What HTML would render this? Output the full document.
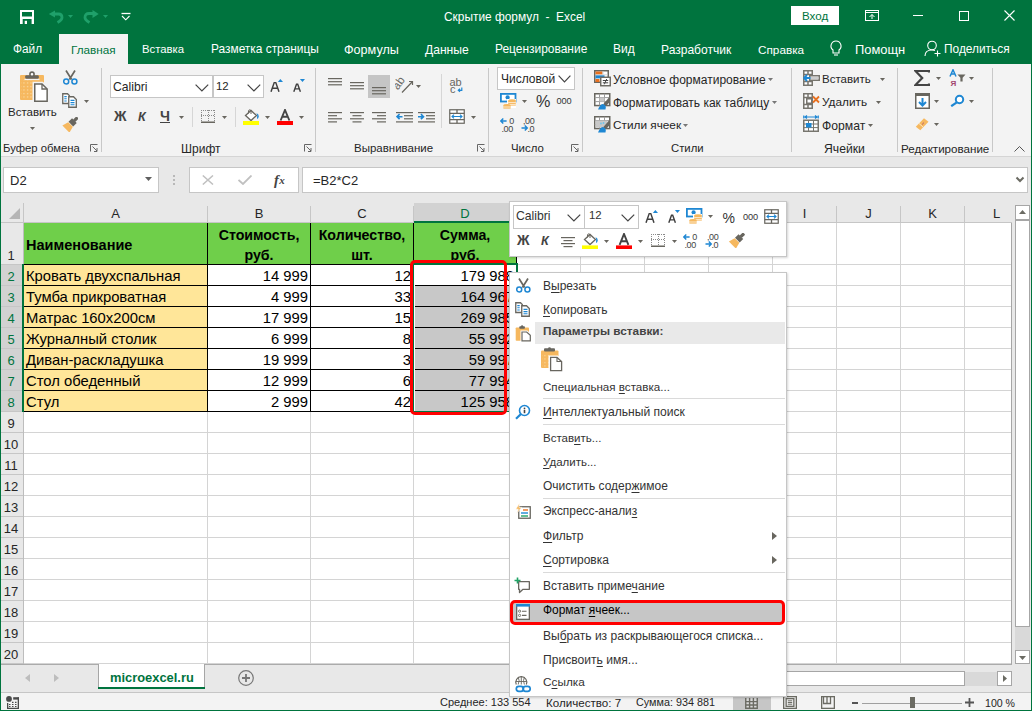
<!DOCTYPE html>
<html><head><meta charset="utf-8"><style>*{box-sizing:border-box}
html,body{margin:0;padding:0}
body{width:1032px;height:711px;overflow:hidden;position:relative;background:#f3f3f3;font-family:"Liberation Sans",sans-serif;font-size:12px;color:#262626}
.a{position:absolute;display:block}
.t{position:absolute;white-space:nowrap;line-height:1}
</style></head><body>
<div class="a" style="left:0px;top:0px;width:1032px;height:64px;background:#00743e;"></div>
<svg class="a" style="left:20px;top:10px;" width="14" height="14" viewBox="0 0 14 14"><rect x="0" y="0" width="14" height="14" fill="#fff"/><rect x="2" y="2" width="10" height="4.5" fill="#00743e"/><rect x="2.7" y="9" width="8.9" height="5" fill="#00743e"/><rect x="4.7" y="10.8" width="2.3" height="3.2" fill="#fff"/></svg>
<svg class="a" style="left:48px;top:9px;" width="16" height="15" viewBox="0 0 16 15"><path d="M0.8 5L7 1.5V8.5Z" fill="#1fa06a"/><path d="M6 5H10.5Q14 5 14 8.5Q14 11 9.5 13.5" fill="none" stroke="#1fa06a" stroke-width="2.8"/></svg>
<svg class="a" style="left:68px;top:15px;" width="5" height="3" viewBox="0 0 5 3"><path d="M0 0H5L2.5 3Z" fill="#1fa06a"/></svg>
<svg class="a" style="left:83px;top:9px;" width="16" height="15" viewBox="0 0 16 15"><path d="M15.7 5L9.5 1V9Z" fill="#1fa06a"/><path d="M10 4.5H6Q2 4.5 2 8.5Q2 11 6.5 13.5" fill="none" stroke="#1fa06a" stroke-width="2.8"/></svg>
<svg class="a" style="left:103px;top:15px;" width="5" height="3" viewBox="0 0 5 3"><path d="M0 0H5L2.5 3Z" fill="#1fa06a"/></svg>
<svg class="a" style="left:121px;top:12px;" width="10" height="9" viewBox="0 0 10 9"><path d="M0.5 1.5H9.5" stroke="#fff" stroke-width="1.3"/><path d="M1 4L4.75 7.8L8.5 4" fill="none" stroke="#fff" stroke-width="1.1"/></svg>
<div class="t" style="left:444px;top:12px;font-size:11.9px;color:#fff;font-weight:normal;">Скрытие формул&nbsp; -&nbsp; Excel</div>
<div class="a" style="left:791px;top:6px;width:48px;height:19px;background:#fff;"></div>
<div class="t" style="left:802px;top:10px;font-size:11.6px;color:#00743e;font-weight:normal;">Вход</div>
<svg class="a" style="left:865px;top:10px;" width="14" height="11" viewBox="0 0 14 11"><rect x="0.5" y="0.5" width="13" height="10" fill="none" stroke="#fff"/><path d="M0.5 2.5H13.5" stroke="#fff"/><path d="M7 9V4.5M4.5 7L7 4.5L9.5 7" fill="none" stroke="#fff"/></svg>
<div class="a" style="left:913px;top:15px;width:10px;height:1px;background:#fff;"></div>
<svg class="a" style="left:959px;top:11px;" width="10" height="10" viewBox="0 0 10 10"><rect x="0.5" y="0.5" width="9" height="9" fill="none" stroke="#fff"/></svg>
<svg class="a" style="left:1004px;top:10px;" width="11" height="11" viewBox="0 0 11 11"><path d="M0.5 0.5L10.5 10.5M10.5 0.5L0.5 10.5" stroke="#fff" stroke-width="1.1"/></svg>
<div class="a" style="left:59px;top:34px;width:69px;height:30px;background:#f3f3f3;"></div>
<div class="t" style="left:13px;top:43.6px;font-size:11.86px;color:#fff;font-weight:normal;">Файл</div>
<div class="t" style="left:71px;top:43.6px;font-size:11.76px;color:#00743e;font-weight:normal;">Главная</div>
<div class="t" style="left:142px;top:43.6px;font-size:11.34px;color:#fff;font-weight:normal;">Вставка</div>
<div class="t" style="left:211px;top:43.6px;font-size:11.9px;color:#fff;font-weight:normal;">Разметка страницы</div>
<div class="t" style="left:344px;top:43.6px;font-size:12.6px;color:#fff;font-weight:normal;">Формулы</div>
<div class="t" style="left:425px;top:43.6px;font-size:12.1px;color:#fff;font-weight:normal;">Данные</div>
<div class="t" style="left:495px;top:43.6px;font-size:11.96px;color:#fff;font-weight:normal;">Рецензирование</div>
<div class="t" style="left:613px;top:43.6px;font-size:11.95px;color:#fff;font-weight:normal;">Вид</div>
<div class="t" style="left:661px;top:43.6px;font-size:12.06px;color:#fff;font-weight:normal;">Разработчик</div>
<div class="t" style="left:758px;top:43.6px;font-size:11.76px;color:#fff;font-weight:normal;">Справка</div>
<div class="t" style="left:855px;top:43.6px;font-size:12.9px;color:#fff;font-weight:normal;">Помощн</div>
<div class="t" style="left:944px;top:43.6px;font-size:11.89px;color:#fff;font-weight:normal;">Поделиться</div>
<svg class="a" style="left:829px;top:40px;" width="14" height="17" viewBox="0 0 14 17"><path d="M7 1A5 5 0 0 0 4 10V13H10V10A5 5 0 0 0 7 1Z" fill="none" stroke="#fff" stroke-width="1.1"/><path d="M5 15H9" stroke="#fff" stroke-width="1.1"/></svg>
<svg class="a" style="left:924px;top:40px;" width="18" height="17" viewBox="0 0 18 17"><circle cx="8" cy="5.5" r="4.3" fill="none" stroke="#fff" stroke-width="1.1"/><path d="M1 16C1 11.5 4 10 8 10C9 10 10 10.2 11 10.6" fill="none" stroke="#fff" stroke-width="1.1"/><path d="M13.5 10.5V16.5M10.5 13.5H16.5" stroke="#fff" stroke-width="1.1"/></svg>
<div class="a" style="left:1px;top:64px;width:1030px;height:92px;background:#f3f3f3;"></div>
<div class="a" style="left:1px;top:156px;width:1030px;height:1px;background:#d5d5d5;"></div>
<div class="a" style="left:101px;top:68px;width:1px;height:84px;background:#c8c8c8;"></div>
<div class="a" style="left:315px;top:68px;width:1px;height:84px;background:#c8c8c8;"></div>
<div class="a" style="left:488px;top:68px;width:1px;height:84px;background:#c8c8c8;"></div>
<div class="a" style="left:582px;top:68px;width:1px;height:84px;background:#c8c8c8;"></div>
<div class="a" style="left:791px;top:68px;width:1px;height:84px;background:#c8c8c8;"></div>
<div class="a" style="left:897px;top:68px;width:1px;height:84px;background:#c8c8c8;"></div>
<div class="a" style="left:992px;top:68px;width:1px;height:84px;background:#c8c8c8;"></div>
<div class="t" style="left:3px;top:143px;font-size:11.3px;color:#262626;font-weight:normal;">Буфер обмена</div>
<div class="t" style="left:181px;top:143px;font-size:12.0px;color:#262626;font-weight:normal;">Шрифт</div>
<div class="t" style="left:354px;top:143px;font-size:11.5px;color:#262626;font-weight:normal;">Выравнивание</div>
<div class="t" style="left:511px;top:143px;font-size:11.4px;color:#262626;font-weight:normal;">Число</div>
<div class="t" style="left:671px;top:143px;font-size:11.3px;color:#262626;font-weight:normal;">Стили</div>
<div class="t" style="left:824px;top:143px;font-size:12.2px;color:#262626;font-weight:normal;">Ячейки</div>
<div class="t" style="left:901px;top:143px;font-size:11.6px;color:#262626;font-weight:normal;">Редактирование</div>
<svg class="a" style="left:90px;top:144px;" width="8" height="8" viewBox="0 0 8 8"><path d="M0.5 7.5V0.5H7.5" fill="none" stroke="#666"/><path d="M2.5 2.5L7 7M7 4V7.5H4" fill="none" stroke="#666"/></svg>
<svg class="a" style="left:304px;top:144px;" width="8" height="8" viewBox="0 0 8 8"><path d="M0.5 7.5V0.5H7.5" fill="none" stroke="#666"/><path d="M2.5 2.5L7 7M7 4V7.5H4" fill="none" stroke="#666"/></svg>
<svg class="a" style="left:477px;top:144px;" width="8" height="8" viewBox="0 0 8 8"><path d="M0.5 7.5V0.5H7.5" fill="none" stroke="#666"/><path d="M2.5 2.5L7 7M7 4V7.5H4" fill="none" stroke="#666"/></svg>
<svg class="a" style="left:571px;top:144px;" width="8" height="8" viewBox="0 0 8 8"><path d="M0.5 7.5V0.5H7.5" fill="none" stroke="#666"/><path d="M2.5 2.5L7 7M7 4V7.5H4" fill="none" stroke="#666"/></svg>
<svg class="a" style="left:1014px;top:146px;" width="11" height="6" viewBox="0 0 11 6"><path d="M0.5 5.5L5.5 0.5L10.5 5.5" fill="none" stroke="#555"/></svg>
<svg class="a" style="left:19px;top:71px;" width="30" height="32" viewBox="0 0 30 32"><defs><pattern id="dots" width="3.5" height="3.5" patternUnits="userSpaceOnUse"><circle cx="1.5" cy="1.5" r="0.7" fill="#fbe0b0"/></pattern></defs><rect x="1" y="4" width="24" height="25" rx="1" fill="#f6b85f"/><rect x="2" y="9" width="12" height="19" fill="url(#dots)"/><rect x="5.5" y="7.7" width="15" height="1.4" fill="#f3f3f3"/><rect x="6.2" y="4.2" width="13.6" height="3.6" rx="1.2" fill="#68665f"/><circle cx="13" cy="3.2" r="2.1" fill="#fff" stroke="#68665f" stroke-width="1.6"/><path d="M15 12.2H23.3L28.9 17.5V31H15Z" fill="#fff" stroke="#f3f3f3" stroke-width="3"/><path d="M15.75 12.95H23L28.15 18V30.25H15.75Z" fill="#fff" stroke="#68665f" stroke-width="1.5"/><path d="M23 12.95V18H28.15" fill="none" stroke="#68665f" stroke-width="1.3"/></svg>
<div class="t" style="left:8px;top:107px;font-size:11.5px;color:#262626;font-weight:normal;">Вставить</div>
<svg class="a" style="left:30px;top:127px;" width="5" height="3" viewBox="0 0 5 3"><path d="M0 0H5L2.5 3Z" fill="#68665f"/></svg>
<svg class="a" style="left:63px;top:70px;" width="15" height="15" viewBox="0 0 15 15"><path d="M3 0.5L8.6 9.5M12 0.5L6.4 9.5" stroke="#68665f" stroke-width="1.7"/><circle cx="3.2" cy="11.6" r="2.5" fill="none" stroke="#1e87d3" stroke-width="1.5"/><circle cx="11.4" cy="11.6" r="2.5" fill="none" stroke="#1e87d3" stroke-width="1.5"/></svg>
<svg class="a" style="left:62px;top:93px;" width="16" height="15" viewBox="0 0 16 15"><path d="M0.75 0.75H5.5L7.3 2.5V10.5H0.75Z" fill="#fff" stroke="#68665f" stroke-width="1.3"/><path d="M6.75 3.75H11.5L14.3 6.5V14.25H6.75Z" fill="#fff" stroke="#68665f" stroke-width="1.3"/><path d="M2.3 3.6H4.7M2.3 5.8H4.7M2.3 8H4.7" stroke="#1e87d3" stroke-width="1.1"/><path d="M8.5 7.4H12.5M8.5 9.6H12.5M8.5 11.8H12.5" stroke="#1e87d3" stroke-width="1.1"/></svg>
<svg class="a" style="left:84px;top:100px;" width="5" height="3" viewBox="0 0 5 3"><path d="M0 0H5L2.5 3Z" fill="#68665f"/></svg>
<svg class="a" style="left:62px;top:117px;" width="16" height="15" viewBox="0 0 16 15"><g transform="translate(8.5 7.5) rotate(45)"><rect x="-1.6" y="-10" width="3.2" height="5" rx="0.8" fill="#68665f"/><rect x="-3.3" y="-5.5" width="6.6" height="5" fill="#68665f"/><path d="M-3.3 0H3.3L5 6.5H-5Z" fill="#f6b85f"/></g></svg>
<div class="a" style="left:110px;top:75px;width:103px;height:23px;background:#fff;border:1px solid #c6c6c6"></div>
<div class="a" style="left:213px;top:75px;width:51px;height:23px;background:#fff;border:1px solid #c6c6c6"></div>
<div class="t" style="left:113px;top:81px;font-size:12.2px;color:#262626;font-weight:normal;">Calibri</div>
<div class="t" style="left:216px;top:81px;font-size:11.4px;color:#262626;font-weight:normal;">12</div>
<svg class="a" style="left:195px;top:84px;" width="14" height="8" viewBox="0 0 14 8"><path d="M0.6 0.6L6.9 7L13.2 0.6" fill="none" stroke="#444" stroke-width="1.2"/></svg>
<svg class="a" style="left:247px;top:84px;" width="14" height="8" viewBox="0 0 14 8"><path d="M0.6 0.6L6.9 7L13.2 0.6" fill="none" stroke="#444" stroke-width="1.2"/></svg>
<svg class="a" style="left:270px;top:79px;" width="14" height="13" viewBox="0 0 14 13"><path d="M1 12.8L4.2 3.6H5.8L9 12.8M2.5 9.2H7.5" fill="none" stroke="#3f3f3f" stroke-width="1.45"/><path d="M7.8 3L10.4 0L13 3Z" fill="#1e87d3"/></svg>
<svg class="a" style="left:292px;top:79px;" width="14" height="13" viewBox="0 0 14 13"><path d="M1.8 12.8L4.5 5.3H5.7L8.4 12.8M3 9.9H7.2" fill="none" stroke="#3f3f3f" stroke-width="1.4"/><path d="M7.9 0H13L10.45 3Z" fill="#1e87d3"/></svg>
<div class="t" style="left:114px;top:110px;font-size:13.8px;color:#444;font-weight:bold;">Ж</div>
<div class="t" style="left:138px;top:110.5px;font-size:12.6px;color:#444;font-weight:bold;font-style:italic">К</div>
<div class="t" style="left:160px;top:109.2px;font-size:14.2px;color:#444;font-weight:bold;">Ч</div>
<div class="a" style="left:160px;top:122px;width:10px;height:1px;background:#444;"></div>
<svg class="a" style="left:179px;top:116px;" width="5" height="3" viewBox="0 0 5 3"><path d="M0 0H5L2.5 3Z" fill="#68665f"/></svg>
<div class="a" style="left:192px;top:107px;width:1px;height:20px;background:#d6d6d6;"></div>
<svg class="a" style="left:201px;top:110px;" width="14" height="13" viewBox="0 0 14 13"><rect x="0" y="0" width="1" height="1" fill="#8a8a8a"/><rect x="0" y="5" width="1" height="1" fill="#8a8a8a"/><rect x="2" y="0" width="1" height="1" fill="#8a8a8a"/><rect x="2" y="5" width="1" height="1" fill="#8a8a8a"/><rect x="4" y="0" width="1" height="1" fill="#8a8a8a"/><rect x="4" y="5" width="1" height="1" fill="#8a8a8a"/><rect x="6" y="0" width="1" height="1" fill="#8a8a8a"/><rect x="6" y="5" width="1" height="1" fill="#8a8a8a"/><rect x="8" y="0" width="1" height="1" fill="#8a8a8a"/><rect x="8" y="5" width="1" height="1" fill="#8a8a8a"/><rect x="10" y="0" width="1" height="1" fill="#8a8a8a"/><rect x="10" y="5" width="1" height="1" fill="#8a8a8a"/><rect x="12" y="0" width="1" height="1" fill="#8a8a8a"/><rect x="12" y="5" width="1" height="1" fill="#8a8a8a"/><rect x="0" y="0" width="1" height="1" fill="#8a8a8a"/><rect x="13" y="0" width="1" height="1" fill="#8a8a8a"/><rect x="7" y="0" width="1" height="1" fill="#8a8a8a"/><rect x="0" y="2" width="1" height="1" fill="#8a8a8a"/><rect x="13" y="2" width="1" height="1" fill="#8a8a8a"/><rect x="7" y="2" width="1" height="1" fill="#8a8a8a"/><rect x="0" y="4" width="1" height="1" fill="#8a8a8a"/><rect x="13" y="4" width="1" height="1" fill="#8a8a8a"/><rect x="7" y="4" width="1" height="1" fill="#8a8a8a"/><rect x="0" y="6" width="1" height="1" fill="#8a8a8a"/><rect x="13" y="6" width="1" height="1" fill="#8a8a8a"/><rect x="7" y="6" width="1" height="1" fill="#8a8a8a"/><rect x="0" y="8" width="1" height="1" fill="#8a8a8a"/><rect x="13" y="8" width="1" height="1" fill="#8a8a8a"/><rect x="7" y="8" width="1" height="1" fill="#8a8a8a"/><rect x="0" y="10" width="1" height="1" fill="#8a8a8a"/><rect x="13" y="10" width="1" height="1" fill="#8a8a8a"/><rect x="7" y="10" width="1" height="1" fill="#8a8a8a"/><rect x="0" y="11.5" width="14" height="1.5" fill="#68665f"/></svg>
<svg class="a" style="left:222px;top:116px;" width="5" height="3" viewBox="0 0 5 3"><path d="M0 0H5L2.5 3Z" fill="#68665f"/></svg>
<div class="a" style="left:235px;top:107px;width:1px;height:20px;background:#d6d6d6;"></div>
<svg class="a" style="left:243px;top:109px;" width="17" height="16" viewBox="0 0 17 16"><path d="M2.5 6.5L8 1.5L13.5 6.5L8 11.5Z" fill="#fff" stroke="#68665f" stroke-width="1.3"/><path d="M5.5 4.5V1.8A1.3 1.3 0 0 1 8 1.8V5" fill="none" stroke="#68665f" stroke-width="1"/><path d="M13.5 4Q16 5 15.8 7.5Q15.5 9.5 14 10L14.2 6Z" fill="#1e87d3"/><rect x="0" y="12" width="16" height="4" fill="#ffff00"/></svg>
<svg class="a" style="left:265px;top:116px;" width="5" height="3" viewBox="0 0 5 3"><path d="M0 0H5L2.5 3Z" fill="#68665f"/></svg>
<svg class="a" style="left:277px;top:109px;" width="16" height="16" viewBox="0 0 16 16"><path d="M3.6 11.5L8 1L12.4 11.5M5.2 7.8H10.8" fill="none" stroke="#444" stroke-width="1.9"/><rect x="0" y="12" width="16" height="4" fill="#ff0000"/></svg>
<svg class="a" style="left:299px;top:116px;" width="5" height="3" viewBox="0 0 5 3"><path d="M0 0H5L2.5 3Z" fill="#68665f"/></svg>
<svg class="a" style="left:328px;top:78px;" width="14" height="9.3" viewBox="0 0 14 9.3"><rect x="0.0" y="0.0" width="14" height="1.2" fill="#68665f"/><rect x="0.0" y="3.1" width="14" height="1.2" fill="#68665f"/><rect x="0.0" y="6.2" width="14" height="1.2" fill="#68665f"/></svg>
<svg class="a" style="left:350px;top:82px;" width="14" height="9.3" viewBox="0 0 14 9.3"><rect x="0.0" y="0.0" width="14" height="1.2" fill="#68665f"/><rect x="0.0" y="3.1" width="14" height="1.2" fill="#68665f"/><rect x="0.0" y="6.2" width="14" height="1.2" fill="#68665f"/></svg>
<div class="a" style="left:368px;top:75px;width:22px;height:23px;background:#c5c5c5;"></div>
<svg class="a" style="left:372px;top:87px;" width="14" height="9.3" viewBox="0 0 14 9.3"><rect x="0.0" y="0.0" width="14" height="1.2" fill="#68665f"/><rect x="0.0" y="3.1" width="14" height="1.2" fill="#68665f"/><rect x="0.0" y="6.2" width="14" height="1.2" fill="#68665f"/></svg>
<svg class="a" style="left:395px;top:77px;" width="19" height="17" viewBox="0 0 19 17"><text x="0" y="0" font-size="11.5" font-family="Liberation Sans" fill="#68665f" transform="translate(3 13.5) rotate(-55)">ab</text><path d="M7 15.5L17.5 4.5M14 4.5H17.5V8" fill="none" stroke="#68665f" stroke-width="1.2"/></svg>
<svg class="a" style="left:416px;top:85px;" width="5" height="3" viewBox="0 0 5 3"><path d="M0 0H5L2.5 3Z" fill="#68665f"/></svg>
<div class="a" style="left:441px;top:74px;width:1px;height:54px;background:#d6d6d6;"></div>
<svg class="a" style="left:449px;top:77px;" width="16" height="18" viewBox="0 0 16 18"><text x="0.5" y="9" font-size="11" font-family="Liberation Sans" fill="#68665f">ab</text><text x="1" y="16" font-size="11" font-family="Liberation Sans" fill="#68665f">c</text><path d="M12.8 10.5V13.3H9.5M11 11.8L9.3 13.3L11 14.8" fill="none" stroke="#1e87d3" stroke-width="1.2"/></svg>
<svg class="a" style="left:328px;top:112px;" width="14" height="12.4" viewBox="0 0 14 12.4"><rect x="0" y="0.0" width="14" height="1.2" fill="#68665f"/><rect x="0" y="3.1" width="9" height="1.2" fill="#68665f"/><rect x="0" y="6.2" width="14" height="1.2" fill="#68665f"/><rect x="0" y="9.3" width="9" height="1.2" fill="#68665f"/></svg>
<svg class="a" style="left:350px;top:112px;" width="14" height="12.4" viewBox="0 0 14 12.4"><rect x="0.0" y="0.0" width="14" height="1.2" fill="#68665f"/><rect x="2.5" y="3.1" width="9" height="1.2" fill="#68665f"/><rect x="0.0" y="6.2" width="14" height="1.2" fill="#68665f"/><rect x="2.5" y="9.3" width="9" height="1.2" fill="#68665f"/></svg>
<svg class="a" style="left:372px;top:112px;" width="14" height="12.4" viewBox="0 0 14 12.4"><rect x="0" y="0.0" width="14" height="1.2" fill="#68665f"/><rect x="5" y="3.1" width="9" height="1.2" fill="#68665f"/><rect x="0" y="6.2" width="14" height="1.2" fill="#68665f"/><rect x="5" y="9.3" width="9" height="1.2" fill="#68665f"/></svg>
<svg class="a" style="left:396px;top:112px;" width="17" height="11" viewBox="0 0 17 11"><rect x="0" y="0" width="17" height="1.2" fill="#68665f"/><rect x="8" y="3.1" width="9" height="1.2" fill="#68665f"/><rect x="8" y="6.2" width="9" height="1.2" fill="#68665f"/><rect x="0" y="9.3" width="17" height="1.2" fill="#68665f"/><path d="M1 4.7H6.5M3.6 2.2L1 4.7L3.6 7.2" fill="none" stroke="#1e87d3" stroke-width="1.6"/></svg>
<svg class="a" style="left:418px;top:112px;" width="17" height="11" viewBox="0 0 17 11"><rect x="0" y="0" width="17" height="1.2" fill="#68665f"/><rect x="8" y="3.1" width="9" height="1.2" fill="#68665f"/><rect x="8" y="6.2" width="9" height="1.2" fill="#68665f"/><rect x="0" y="9.3" width="17" height="1.2" fill="#68665f"/><path d="M0 4.7H5.5M2.9 2.2L5.5 4.7L2.9 7.2" fill="none" stroke="#1e87d3" stroke-width="1.6"/></svg>
<svg class="a" style="left:449px;top:109px;" width="16" height="15" viewBox="0 0 16 15"><rect x="0.75" y="0.75" width="14.5" height="13.5" fill="#fff" stroke="#68665f" stroke-width="1.2"/><path d="M0.75 4.3H15.25M0.75 10.7H15.25M8.0 0.75V4.3M8.0 10.7V14.25" stroke="#68665f" stroke-width="1.3"/><path d="M3 7.5H13M5 5.7L3 7.5L5 9.3M11 5.7L13 7.5L11 9.3" fill="none" stroke="#1e87d3" stroke-width="1.1"/></svg>
<svg class="a" style="left:471px;top:116px;" width="5" height="3" viewBox="0 0 5 3"><path d="M0 0H5L2.5 3Z" fill="#68665f"/></svg>
<div class="a" style="left:497px;top:67px;width:78px;height:23px;background:#fff;border:1px solid #c6c6c6;overflow:hidden"><div class="t" style="left:3px;top:5px;font-size:12.0px;color:#262626">Числовой</div></div>
<div class="a" style="left:555px;top:68px;width:19px;height:21px;background:#fff;"></div>
<svg class="a" style="left:558px;top:75px;" width="13" height="8" viewBox="0 0 13 8"><path d="M0.6 0.6L6.5 6.8L12.4 0.6" fill="none" stroke="#444" stroke-width="1.2"/></svg>
<svg class="a" style="left:500px;top:93px;" width="17" height="17" viewBox="0 0 17 17"><rect x="0.9" y="0.9" width="14.6" height="7.6" fill="#fff" stroke="#1e87d3" stroke-width="1.8"/><circle cx="7.6" cy="4.4" r="2.1" fill="#1e87d3"/><rect x="7" y="6" width="9" height="9" fill="#fff"/><ellipse cx="12" cy="7.6" rx="3.8" ry="1.3" fill="#f6b85f"/><rect x="8.2" y="7.6" width="7.6" height="5" fill="#f6b85f"/><path d="M8.2 9.6H15.8M8.2 11.6H15.8" stroke="#fff" stroke-width="0.7"/><ellipse cx="7" cy="12.2" rx="3.6" ry="1.3" fill="#f6b85f"/><rect x="3.4" y="12.2" width="7.2" height="3.4" fill="#f6b85f"/><path d="M3.4 14H10.6" stroke="#fff" stroke-width="0.7"/></svg>
<svg class="a" style="left:522px;top:100px;" width="5" height="3" viewBox="0 0 5 3"><path d="M0 0H5L2.5 3Z" fill="#68665f"/></svg>
<div class="t" style="left:536px;top:92.8px;font-size:16.2px;color:#333;font-weight:normal;">%</div>
<div class="t" style="left:556.5px;top:96.5px;font-size:9.2px;color:#333;font-weight:normal;letter-spacing:-0.1px">000</div>
<svg class="a" style="left:500px;top:117px;" width="16" height="15" viewBox="0 0 16 15"><path d="M0.8 4H6.6M3.3 1.4L0.8 4L3.3 6.6" fill="none" stroke="#1e87d3" stroke-width="1.4"/><text x="9.3" y="7" font-size="9" font-family="Liberation Sans" fill="#444">0</text><text x="1.5" y="14.5" font-size="9" font-family="Liberation Sans" fill="#444" letter-spacing="-0.4">,00</text></svg>
<svg class="a" style="left:521px;top:117px;" width="16" height="15" viewBox="0 0 16 15"><text x="2" y="7" font-size="9" font-family="Liberation Sans" fill="#444" letter-spacing="-0.4">,00</text><path d="M0.5 11H6.3M3.8 8.4L6.3 11L3.8 13.6" fill="none" stroke="#1e87d3" stroke-width="1.4"/><text x="6.5" y="14.5" font-size="9" font-family="Liberation Sans" fill="#444" letter-spacing="-0.4">,0</text></svg>
<svg class="a" style="left:594px;top:70px;" width="17" height="17" viewBox="0 0 17 17"><rect x="0.75" y="0.75" width="13.5" height="11.5" fill="#fff" stroke="#68665f" stroke-width="1.5"/><rect x="1.5" y="1.5" width="7" height="3" fill="#e8701f"/><rect x="1.5" y="5.2" width="9" height="3.2" fill="#1e87d3"/><rect x="1.5" y="9" width="4" height="3" fill="#e8701f"/><path d="M9 1V4.5M1.5 4.8H13.5" stroke="#ccc" stroke-width="0.8"/><rect x="6.5" y="7.5" width="10" height="9" fill="#fff" stroke="#f3f3f3" stroke-width="1"/><rect x="6.75" y="7.25" width="9.5" height="8.5" fill="#fff" stroke="#68665f" stroke-width="1.4"/><path d="M8.8 10.5H14.2M8.8 12.8H14.2M12.7 9L10.3 14.3" stroke="#444" stroke-width="1"/></svg>
<div class="t" style="left:613px;top:74px;font-size:12.0px;color:#262626;font-weight:normal;">Условное форматирование</div>
<svg class="a" style="left:594px;top:93px;" width="17" height="17" viewBox="0 0 17 17"><rect x="0.75" y="0.75" width="15" height="11.8" fill="#fff" stroke="#68665f" stroke-width="1.5"/><path d="M0.75 4.6H15.75M0.75 8.6H15.75M5.5 0.75V12.5M10.5 0.75V12.5" stroke="#9a9a9a" stroke-width="1"/><rect x="5.5" y="4.6" width="5" height="4" fill="#c8c8c8"/><path d="M15.8 3.5L9 11.5L12 13L15.8 9Z" fill="#68665f"/><path d="M8.5 11Q6 11.5 4 16.5H11.5Q12.5 14 11 12Z" fill="#1e87d3"/></svg>
<div class="t" style="left:613px;top:97px;font-size:12.0px;color:#262626;font-weight:normal;">Форматировать как таблицу</div>
<svg class="a" style="left:594px;top:116px;" width="17" height="17" viewBox="0 0 17 17"><rect x="0.75" y="0.75" width="15" height="11.8" fill="#fff" stroke="#68665f" stroke-width="1.5"/><path d="M0.75 4.6H15.75M0.75 8.6H15.75M5.5 0.75V12.5M10.5 0.75V12.5" stroke="#9a9a9a" stroke-width="1"/><rect x="1.5" y="4.6" width="12" height="7" fill="#c8c8c8"/><circle cx="7" cy="7.5" r="0.9" fill="#6cc6f0"/><circle cx="9.5" cy="7" r="0.9" fill="#6cc6f0"/><path d="M15.8 3.5L9 11.5L12 13L15.8 9Z" fill="#68665f"/><path d="M8.5 11Q6 11.5 4 16.5H11.5Q12.5 14 11 12Z" fill="#1e87d3"/></svg>
<div class="t" style="left:613px;top:120px;font-size:11.8px;color:#262626;font-weight:normal;">Стили ячеек</div>
<svg class="a" style="left:768px;top:78px;" width="5" height="3" viewBox="0 0 5 3"><path d="M0 0H5L2.5 3Z" fill="#777"/></svg>
<svg class="a" style="left:772px;top:101px;" width="5" height="3" viewBox="0 0 5 3"><path d="M0 0H5L2.5 3Z" fill="#777"/></svg>
<svg class="a" style="left:683px;top:124px;" width="5" height="3" viewBox="0 0 5 3"><path d="M0 0H5L2.5 3Z" fill="#777"/></svg>
<svg class="a" style="left:803px;top:70px;" width="17" height="17" viewBox="0 0 17 17"><path d="M0.75 0.75H9.25V15.25H0.75ZM0.75 4.5H9.25M0.75 11.5H9.25M5 0.75V4.5M5 11.5V15.25" fill="#fff" stroke="#77756e" stroke-width="1.5"/><rect x="6.75" y="5.75" width="9.5" height="4.5" fill="#fff" stroke="#77756e" stroke-width="1.5"/><path d="M8 8H15" stroke="#bbb" stroke-width="1.5"/><path d="M1 8H7.5M4 5L1 8L4 11" fill="none" stroke="#1e87d3" stroke-width="1.8"/></svg>
<div class="t" style="left:822px;top:74px;font-size:11.5px;color:#262626;font-weight:normal;">Вставить</div>
<svg class="a" style="left:880px;top:78px;" width="5" height="3" viewBox="0 0 5 3"><path d="M0 0H5L2.5 3Z" fill="#68665f"/></svg>
<svg class="a" style="left:803px;top:93px;" width="17" height="17" viewBox="0 0 17 17"><path d="M0.75 0.75H9.25V15.25H0.75ZM0.75 4.5H9.25M0.75 11.5H9.25M5 0.75V4.5M5 11.5V15.25" fill="#fff" stroke="#77756e" stroke-width="1.5"/><rect x="3.75" y="5.75" width="5" height="4.5" fill="#fff" stroke="#77756e" stroke-width="1.5"/><path d="M10 3.5L16 9.5M16 3.5L10 9.5" stroke="#e8701f" stroke-width="1.8"/></svg>
<div class="t" style="left:822px;top:97px;font-size:11.8px;color:#262626;font-weight:normal;">Удалить</div>
<svg class="a" style="left:876px;top:101px;" width="5" height="3" viewBox="0 0 5 3"><path d="M0 0H5L2.5 3Z" fill="#68665f"/></svg>
<svg class="a" style="left:803px;top:115px;" width="16" height="17" viewBox="0 0 16 17"><path d="M0.75 0.5V3.5M15.25 0.5V3.5M2 2H14M4 0.5L2 2L4 3.5M12 0.5L14 2L12 3.5" fill="none" stroke="#1e87d3" stroke-width="1.2"/><rect x="0.75" y="5.25" width="14.5" height="11" fill="#fff" stroke="#77756e" stroke-width="1.5"/><path d="M0.75 9H15.25M0.75 12.6H15.25M5.5 5.25V16.25M10.5 5.25V16.25" stroke="#77756e" stroke-width="1"/><rect x="3" y="8" width="5.5" height="4.5" fill="#1e87d3"/></svg>
<div class="t" style="left:822px;top:120px;font-size:12.2px;color:#262626;font-weight:normal;">Формат</div>
<svg class="a" style="left:868px;top:124px;" width="5" height="3" viewBox="0 0 5 3"><path d="M0 0H5L2.5 3Z" fill="#68665f"/></svg>
<svg class="a" style="left:914px;top:70px;" width="16" height="16" viewBox="0 0 16 16"><path d="M15 2.5V1H1.5L8.2 8L1.5 15H15V13.5" fill="none" stroke="#444" stroke-width="2.2" stroke-linejoin="miter"/></svg>
<svg class="a" style="left:936px;top:77px;" width="5" height="3" viewBox="0 0 5 3"><path d="M0 0H5L2.5 3Z" fill="#68665f"/></svg>
<svg class="a" style="left:949px;top:69px;" width="18" height="18" viewBox="0 0 18 18"><path d="M1 7.5L4 0.8L7 7.5M2.2 5H5.8" fill="none" stroke="#1e87d3" stroke-width="1.5"/><text x="1.5" y="16.5" font-size="8" font-weight="bold" font-family="Liberation Sans" fill="#a2456f">Я</text><path d="M8.5 5.5H16.5L13.6 8.8V12.6H11.4V8.8Z" fill="#68665f"/></svg>
<svg class="a" style="left:969px;top:77px;" width="5" height="3" viewBox="0 0 5 3"><path d="M0 0H5L2.5 3Z" fill="#68665f"/></svg>
<svg class="a" style="left:915px;top:93px;" width="15" height="16" viewBox="0 0 15 16"><rect x="0.75" y="0.75" width="13.5" height="14.5" fill="#fff" stroke="#68665f" stroke-width="1.5"/><rect x="0" y="0" width="15" height="3" fill="#68665f"/><path d="M7.5 5V12.5M4 9L7.5 12.5L11 9" fill="none" stroke="#1e87d3" stroke-width="2"/></svg>
<svg class="a" style="left:934px;top:100px;" width="5" height="3" viewBox="0 0 5 3"><path d="M0 0H5L2.5 3Z" fill="#68665f"/></svg>
<svg class="a" style="left:950px;top:94px;" width="15" height="13" viewBox="0 0 15 13"><circle cx="9.5" cy="5.5" r="3.7" fill="#fff" stroke="#1e87d3" stroke-width="2"/><path d="M6.8 8.3L1.2 12.2" stroke="#1e87d3" stroke-width="2.2"/></svg>
<svg class="a" style="left:969px;top:100px;" width="5" height="3" viewBox="0 0 5 3"><path d="M0 0H5L2.5 3Z" fill="#68665f"/></svg>
<svg class="a" style="left:915px;top:117px;" width="14" height="14" viewBox="0 0 14 14"><path d="M0.8 9.8L9 1.3L13.5 4.8L5.3 13.3Z" fill="#f6b85f"/><path d="M4 6.5L8 10" stroke="#fde7c0" stroke-width="1"/><circle cx="8.5" cy="6" r="0.5" fill="#a2456f"/><circle cx="7.5" cy="7" r="0.5" fill="#a2456f"/></svg>
<svg class="a" style="left:934px;top:123px;" width="5" height="3" viewBox="0 0 5 3"><path d="M0 0H5L2.5 3Z" fill="#68665f"/></svg>
<div class="a" style="left:1px;top:157px;width:1030px;height:46px;background:#e8e8e8;"></div>
<div class="a" style="left:3px;top:167px;width:156px;height:26px;background:#fff;border:1px solid #c6c6c6"></div>
<div class="t" style="left:10px;top:174px;font-size:13px;color:#262626;font-weight:normal;">D2</div>
<svg class="a" style="left:145px;top:177px;" width="7" height="4" viewBox="0 0 7 4"><path d="M0 0H7L3.5 4Z" fill="#5f5f5f"/></svg>
<div class="a" style="left:173px;top:175px;width:2px;height:2px;background:#b8b8b8;"></div>
<div class="a" style="left:173px;top:179px;width:2px;height:2px;background:#b8b8b8;"></div>
<div class="a" style="left:173px;top:183px;width:2px;height:2px;background:#b8b8b8;"></div>
<div class="a" style="left:189px;top:167px;width:110px;height:26px;background:#fff;border:1px solid #c6c6c6"></div>
<svg class="a" style="left:202px;top:175px;" width="12" height="10" viewBox="0 0 12 10"><path d="M0.8 0.5L11 9.5M11 0.5L0.8 9.5" stroke="#c0c0c0" stroke-width="1.5"/></svg>
<svg class="a" style="left:238px;top:175px;" width="14" height="10" viewBox="0 0 14 10"><path d="M0.5 5L5 9L13.5 0.5" fill="none" stroke="#c0c0c0" stroke-width="1.8"/></svg>
<svg class="a" style="left:273px;top:172px;" width="15" height="16" viewBox="0 0 15 16"><text x="1" y="12.5" font-size="14.5" font-style="italic" font-weight="bold" font-family="Liberation Serif" fill="#444">f</text><text x="6.2" y="12" font-size="11" font-style="italic" font-weight="bold" font-family="Liberation Serif" fill="#444">x</text></svg>
<div class="a" style="left:302px;top:167px;width:726px;height:26px;background:#fff;border:1px solid #c6c6c6"></div>
<div class="t" style="left:313px;top:174px;font-size:13px;color:#262626;font-weight:normal;">=B2*C2</div>
<svg class="a" style="left:1015px;top:176px;" width="10" height="7" viewBox="0 0 10 7"><path d="M1.5 1.5L5 5L8.5 1.5" fill="none" stroke="#6b6b63" stroke-width="2"/></svg>
<div class="a" style="left:1px;top:203px;width:1011px;height:20px;background:#e8e8e8;"></div>
<div class="a" style="left:24px;top:223px;width:988px;height:441px;background:#fff;"></div>
<div class="a" style="left:1px;top:223px;width:23px;height:441px;background:#e8e8e8;"></div>
<div class="a" style="left:414px;top:203px;width:102px;height:19px;background:#d2d2d2;"></div>
<div class="a" style="left:1px;top:265px;width:22px;height:146px;background:#d2d2d2;"></div>
<div class="a" style="left:207px;top:206px;width:1px;height:16px;background:#c6c6c6;"></div>
<div class="a" style="left:310px;top:206px;width:1px;height:16px;background:#c6c6c6;"></div>
<div class="a" style="left:413px;top:206px;width:1px;height:16px;background:#c6c6c6;"></div>
<div class="a" style="left:516px;top:206px;width:1px;height:16px;background:#c6c6c6;"></div>
<div class="a" style="left:580px;top:206px;width:1px;height:16px;background:#c6c6c6;"></div>
<div class="a" style="left:644px;top:206px;width:1px;height:16px;background:#c6c6c6;"></div>
<div class="a" style="left:708px;top:206px;width:1px;height:16px;background:#c6c6c6;"></div>
<div class="a" style="left:772px;top:206px;width:1px;height:16px;background:#c6c6c6;"></div>
<div class="a" style="left:836px;top:206px;width:1px;height:16px;background:#c6c6c6;"></div>
<div class="a" style="left:900px;top:206px;width:1px;height:16px;background:#c6c6c6;"></div>
<div class="a" style="left:964px;top:206px;width:1px;height:16px;background:#c6c6c6;"></div>
<div class="a" style="left:1028px;top:206px;width:1px;height:16px;background:#c6c6c6;"></div>
<div class="a" style="left:23px;top:203px;width:1px;height:19px;background:#c6c6c6;"></div>
<div class="a" style="left:1px;top:222px;width:1011px;height:1px;background:#c6c6c6;"></div>
<div class="a" style="left:414px;top:221px;width:103px;height:2px;background:#00743e;"></div>
<div class="a" style="left:23px;top:223px;width:1px;height:441px;background:#bdbdbd;"></div>
<div class="a" style="left:22px;top:265px;width:2px;height:146px;background:#00743e;"></div>
<svg class="a" style="left:9px;top:208px;" width="11" height="11" viewBox="0 0 11 11"><path d="M11 0V11H0Z" fill="#b5b5b5"/></svg>
<div class="t" style="left:24px;top:207px;width:183px;text-align:center;font-size:13px;color:#262626">A</div>
<div class="t" style="left:208px;top:207px;width:102px;text-align:center;font-size:13px;color:#262626">B</div>
<div class="t" style="left:311px;top:207px;width:102px;text-align:center;font-size:13px;color:#262626">C</div>
<div class="t" style="left:414px;top:207px;width:102px;text-align:center;font-size:13px;color:#00743e">D</div>
<div class="t" style="left:517px;top:207px;width:63px;text-align:center;font-size:13px;color:#262626">E</div>
<div class="t" style="left:581px;top:207px;width:63px;text-align:center;font-size:13px;color:#262626">F</div>
<div class="t" style="left:645px;top:207px;width:63px;text-align:center;font-size:13px;color:#262626">G</div>
<div class="t" style="left:709px;top:207px;width:63px;text-align:center;font-size:13px;color:#262626">H</div>
<div class="t" style="left:773px;top:207px;width:63px;text-align:center;font-size:13px;color:#262626">I</div>
<div class="t" style="left:837px;top:207px;width:63px;text-align:center;font-size:13px;color:#262626">J</div>
<div class="t" style="left:901px;top:207px;width:63px;text-align:center;font-size:13px;color:#262626">K</div>
<div class="t" style="left:965px;top:207px;width:63px;text-align:center;font-size:13px;color:#262626">L</div>
<div class="a" style="left:24px;top:264px;width:988px;height:1px;background:#d4d4d4;"></div>
<div class="a" style="left:1px;top:264px;width:22px;height:1px;background:#c6c6c6;"></div>
<div class="a" style="left:24px;top:285px;width:988px;height:1px;background:#d4d4d4;"></div>
<div class="a" style="left:1px;top:285px;width:22px;height:1px;background:#c6c6c6;"></div>
<div class="a" style="left:24px;top:306px;width:988px;height:1px;background:#d4d4d4;"></div>
<div class="a" style="left:1px;top:306px;width:22px;height:1px;background:#c6c6c6;"></div>
<div class="a" style="left:24px;top:327px;width:988px;height:1px;background:#d4d4d4;"></div>
<div class="a" style="left:1px;top:327px;width:22px;height:1px;background:#c6c6c6;"></div>
<div class="a" style="left:24px;top:348px;width:988px;height:1px;background:#d4d4d4;"></div>
<div class="a" style="left:1px;top:348px;width:22px;height:1px;background:#c6c6c6;"></div>
<div class="a" style="left:24px;top:369px;width:988px;height:1px;background:#d4d4d4;"></div>
<div class="a" style="left:1px;top:369px;width:22px;height:1px;background:#c6c6c6;"></div>
<div class="a" style="left:24px;top:390px;width:988px;height:1px;background:#d4d4d4;"></div>
<div class="a" style="left:1px;top:390px;width:22px;height:1px;background:#c6c6c6;"></div>
<div class="a" style="left:24px;top:411px;width:988px;height:1px;background:#d4d4d4;"></div>
<div class="a" style="left:1px;top:411px;width:22px;height:1px;background:#c6c6c6;"></div>
<div class="a" style="left:24px;top:432px;width:988px;height:1px;background:#d4d4d4;"></div>
<div class="a" style="left:1px;top:432px;width:22px;height:1px;background:#c6c6c6;"></div>
<div class="a" style="left:24px;top:453px;width:988px;height:1px;background:#d4d4d4;"></div>
<div class="a" style="left:1px;top:453px;width:22px;height:1px;background:#c6c6c6;"></div>
<div class="a" style="left:24px;top:474px;width:988px;height:1px;background:#d4d4d4;"></div>
<div class="a" style="left:1px;top:474px;width:22px;height:1px;background:#c6c6c6;"></div>
<div class="a" style="left:24px;top:495px;width:988px;height:1px;background:#d4d4d4;"></div>
<div class="a" style="left:1px;top:495px;width:22px;height:1px;background:#c6c6c6;"></div>
<div class="a" style="left:24px;top:516px;width:988px;height:1px;background:#d4d4d4;"></div>
<div class="a" style="left:1px;top:516px;width:22px;height:1px;background:#c6c6c6;"></div>
<div class="a" style="left:24px;top:537px;width:988px;height:1px;background:#d4d4d4;"></div>
<div class="a" style="left:1px;top:537px;width:22px;height:1px;background:#c6c6c6;"></div>
<div class="a" style="left:24px;top:558px;width:988px;height:1px;background:#d4d4d4;"></div>
<div class="a" style="left:1px;top:558px;width:22px;height:1px;background:#c6c6c6;"></div>
<div class="a" style="left:24px;top:579px;width:988px;height:1px;background:#d4d4d4;"></div>
<div class="a" style="left:1px;top:579px;width:22px;height:1px;background:#c6c6c6;"></div>
<div class="a" style="left:24px;top:600px;width:988px;height:1px;background:#d4d4d4;"></div>
<div class="a" style="left:1px;top:600px;width:22px;height:1px;background:#c6c6c6;"></div>
<div class="a" style="left:24px;top:621px;width:988px;height:1px;background:#d4d4d4;"></div>
<div class="a" style="left:1px;top:621px;width:22px;height:1px;background:#c6c6c6;"></div>
<div class="a" style="left:24px;top:642px;width:988px;height:1px;background:#d4d4d4;"></div>
<div class="a" style="left:1px;top:642px;width:22px;height:1px;background:#c6c6c6;"></div>
<div class="a" style="left:24px;top:663px;width:988px;height:1px;background:#d4d4d4;"></div>
<div class="a" style="left:1px;top:663px;width:22px;height:1px;background:#c6c6c6;"></div>
<div class="a" style="left:207px;top:223px;width:1px;height:441px;background:#d4d4d4;"></div>
<div class="a" style="left:310px;top:223px;width:1px;height:441px;background:#d4d4d4;"></div>
<div class="a" style="left:413px;top:223px;width:1px;height:441px;background:#d4d4d4;"></div>
<div class="a" style="left:516px;top:223px;width:1px;height:441px;background:#d4d4d4;"></div>
<div class="a" style="left:580px;top:223px;width:1px;height:441px;background:#d4d4d4;"></div>
<div class="a" style="left:644px;top:223px;width:1px;height:441px;background:#d4d4d4;"></div>
<div class="a" style="left:708px;top:223px;width:1px;height:441px;background:#d4d4d4;"></div>
<div class="a" style="left:772px;top:223px;width:1px;height:441px;background:#d4d4d4;"></div>
<div class="a" style="left:836px;top:223px;width:1px;height:441px;background:#d4d4d4;"></div>
<div class="a" style="left:900px;top:223px;width:1px;height:441px;background:#d4d4d4;"></div>
<div class="a" style="left:964px;top:223px;width:1px;height:441px;background:#d4d4d4;"></div>
<div class="t" style="left:0px;top:249px;width:22px;text-align:center;font-size:13px;color:#262626">1</div>
<div class="t" style="left:0px;top:270px;width:22px;text-align:center;font-size:13px;color:#00743e">2</div>
<div class="t" style="left:0px;top:291px;width:22px;text-align:center;font-size:13px;color:#00743e">3</div>
<div class="t" style="left:0px;top:312px;width:22px;text-align:center;font-size:13px;color:#00743e">4</div>
<div class="t" style="left:0px;top:333px;width:22px;text-align:center;font-size:13px;color:#00743e">5</div>
<div class="t" style="left:0px;top:354px;width:22px;text-align:center;font-size:13px;color:#00743e">6</div>
<div class="t" style="left:0px;top:375px;width:22px;text-align:center;font-size:13px;color:#00743e">7</div>
<div class="t" style="left:0px;top:396px;width:22px;text-align:center;font-size:13px;color:#00743e">8</div>
<div class="t" style="left:0px;top:417px;width:22px;text-align:center;font-size:13px;color:#262626">9</div>
<div class="t" style="left:0px;top:438px;width:22px;text-align:center;font-size:13px;color:#262626">10</div>
<div class="t" style="left:0px;top:459px;width:22px;text-align:center;font-size:13px;color:#262626">11</div>
<div class="t" style="left:0px;top:480px;width:22px;text-align:center;font-size:13px;color:#262626">12</div>
<div class="t" style="left:0px;top:501px;width:22px;text-align:center;font-size:13px;color:#262626">13</div>
<div class="t" style="left:0px;top:522px;width:22px;text-align:center;font-size:13px;color:#262626">14</div>
<div class="t" style="left:0px;top:543px;width:22px;text-align:center;font-size:13px;color:#262626">15</div>
<div class="t" style="left:0px;top:564px;width:22px;text-align:center;font-size:13px;color:#262626">16</div>
<div class="t" style="left:0px;top:585px;width:22px;text-align:center;font-size:13px;color:#262626">17</div>
<div class="t" style="left:0px;top:606px;width:22px;text-align:center;font-size:13px;color:#262626">18</div>
<div class="t" style="left:0px;top:627px;width:22px;text-align:center;font-size:13px;color:#262626">19</div>
<div class="t" style="left:0px;top:648px;width:22px;text-align:center;font-size:13px;color:#262626">20</div>
<div class="a" style="left:24px;top:223px;width:493px;height:41px;background:#6fcf4a;"></div>
<div class="a" style="left:24px;top:265px;width:183px;height:20px;background:#ffe699;"></div>
<div class="a" style="left:24px;top:286px;width:183px;height:20px;background:#ffe699;"></div>
<div class="a" style="left:414px;top:286px;width:102px;height:20px;background:#c8c8c8;"></div>
<div class="a" style="left:24px;top:307px;width:183px;height:20px;background:#ffe699;"></div>
<div class="a" style="left:414px;top:307px;width:102px;height:20px;background:#c8c8c8;"></div>
<div class="a" style="left:24px;top:328px;width:183px;height:20px;background:#ffe699;"></div>
<div class="a" style="left:414px;top:328px;width:102px;height:20px;background:#c8c8c8;"></div>
<div class="a" style="left:24px;top:349px;width:183px;height:20px;background:#ffe699;"></div>
<div class="a" style="left:414px;top:349px;width:102px;height:20px;background:#c8c8c8;"></div>
<div class="a" style="left:24px;top:370px;width:183px;height:20px;background:#ffe699;"></div>
<div class="a" style="left:414px;top:370px;width:102px;height:20px;background:#c8c8c8;"></div>
<div class="a" style="left:24px;top:391px;width:183px;height:20px;background:#ffe699;"></div>
<div class="a" style="left:414px;top:391px;width:102px;height:20px;background:#c8c8c8;"></div>
<div class="a" style="left:24px;top:264px;width:493px;height:1px;background:#000;"></div>
<div class="a" style="left:24px;top:285px;width:493px;height:1px;background:#000;"></div>
<div class="a" style="left:24px;top:306px;width:493px;height:1px;background:#000;"></div>
<div class="a" style="left:24px;top:327px;width:493px;height:1px;background:#000;"></div>
<div class="a" style="left:24px;top:348px;width:493px;height:1px;background:#000;"></div>
<div class="a" style="left:24px;top:369px;width:493px;height:1px;background:#000;"></div>
<div class="a" style="left:24px;top:390px;width:493px;height:1px;background:#000;"></div>
<div class="a" style="left:24px;top:411px;width:493px;height:1px;background:#000;"></div>
<div class="a" style="left:207px;top:223px;width:1px;height:189px;background:#000;"></div>
<div class="a" style="left:310px;top:223px;width:1px;height:189px;background:#000;"></div>
<div class="a" style="left:413px;top:223px;width:1px;height:189px;background:#000;"></div>
<div class="a" style="left:516px;top:223px;width:1px;height:189px;background:#000;"></div>
<div class="t" style="left:26px;top:238px;font-size:14.5px;color:#000;font-weight:bold;">Наименование</div>
<div class="t" style="left:208px;top:228px;width:102px;text-align:center;font-size:14.2px;font-weight:bold;color:#000">Стоимость,</div>
<div class="t" style="left:208px;top:248px;width:102px;text-align:center;font-size:14.2px;font-weight:bold;color:#000">руб.</div>
<div class="t" style="left:311px;top:228px;width:102px;text-align:center;font-size:14.2px;font-weight:bold;color:#000">Количество,</div>
<div class="t" style="left:311px;top:248px;width:102px;text-align:center;font-size:14.2px;font-weight:bold;color:#000">шт.</div>
<div class="t" style="left:414px;top:228px;width:102px;text-align:center;font-size:14.2px;font-weight:bold;color:#000">Сумма,</div>
<div class="t" style="left:414px;top:248px;width:102px;text-align:center;font-size:14.2px;font-weight:bold;color:#000">руб.</div>
<div class="t" style="left:26px;top:269px;font-size:14.8px;color:#000;font-weight:normal;">Кровать двухспальная</div>
<div class="t" style="left:208px;top:269px;width:100px;text-align:right;font-size:14.8px;color:#000">14 999</div>
<div class="t" style="left:311px;top:269px;width:100px;text-align:right;font-size:14.8px;color:#000">12</div>
<div class="t" style="left:414px;top:269px;width:100px;text-align:right;font-size:14.8px;color:#000">179 988</div>
<div class="t" style="left:26px;top:290px;font-size:14.8px;color:#000;font-weight:normal;">Тумба прикроватная</div>
<div class="t" style="left:208px;top:290px;width:100px;text-align:right;font-size:14.8px;color:#000">4 999</div>
<div class="t" style="left:311px;top:290px;width:100px;text-align:right;font-size:14.8px;color:#000">33</div>
<div class="t" style="left:414px;top:290px;width:100px;text-align:right;font-size:14.8px;color:#000">164 967</div>
<div class="t" style="left:26px;top:311px;font-size:14.8px;color:#000;font-weight:normal;">Матрас 160х200см</div>
<div class="t" style="left:208px;top:311px;width:100px;text-align:right;font-size:14.8px;color:#000">17 999</div>
<div class="t" style="left:311px;top:311px;width:100px;text-align:right;font-size:14.8px;color:#000">15</div>
<div class="t" style="left:414px;top:311px;width:100px;text-align:right;font-size:14.8px;color:#000">269 985</div>
<div class="t" style="left:26px;top:332px;font-size:14.8px;color:#000;font-weight:normal;">Журналный столик</div>
<div class="t" style="left:208px;top:332px;width:100px;text-align:right;font-size:14.8px;color:#000">6 999</div>
<div class="t" style="left:311px;top:332px;width:100px;text-align:right;font-size:14.8px;color:#000">8</div>
<div class="t" style="left:414px;top:332px;width:100px;text-align:right;font-size:14.8px;color:#000">55 992</div>
<div class="t" style="left:26px;top:353px;font-size:14.8px;color:#000;font-weight:normal;">Диван-раскладушка</div>
<div class="t" style="left:208px;top:353px;width:100px;text-align:right;font-size:14.8px;color:#000">19 999</div>
<div class="t" style="left:311px;top:353px;width:100px;text-align:right;font-size:14.8px;color:#000">3</div>
<div class="t" style="left:414px;top:353px;width:100px;text-align:right;font-size:14.8px;color:#000">59 997</div>
<div class="t" style="left:26px;top:374px;font-size:14.8px;color:#000;font-weight:normal;">Стол обеденный</div>
<div class="t" style="left:208px;top:374px;width:100px;text-align:right;font-size:14.8px;color:#000">12 999</div>
<div class="t" style="left:311px;top:374px;width:100px;text-align:right;font-size:14.8px;color:#000">6</div>
<div class="t" style="left:414px;top:374px;width:100px;text-align:right;font-size:14.8px;color:#000">77 994</div>
<div class="t" style="left:26px;top:395px;font-size:14.8px;color:#000;font-weight:normal;">Стул</div>
<div class="t" style="left:208px;top:395px;width:100px;text-align:right;font-size:14.8px;color:#000">2 999</div>
<div class="t" style="left:311px;top:395px;width:100px;text-align:right;font-size:14.8px;color:#000">42</div>
<div class="t" style="left:414px;top:395px;width:100px;text-align:right;font-size:14.8px;color:#000">125 958</div>
<div class="a" style="left:414px;top:285px;width:1px;height:126px;background:#ffffff;"></div>
<div class="a" style="left:22px;top:264px;width:2px;height:148px;background:#00743e;"></div>
<div class="a" style="left:413px;top:263px;width:104px;height:2px;background:#00743e;"></div>
<div class="a" style="left:516px;top:263px;width:2px;height:9px;background:#00743e;"></div>
<div class="a" style="left:413px;top:263px;width:1px;height:149px;background:#00743e;"></div>
<div class="a" style="left:413px;top:411px;width:104px;height:1px;background:#00743e;"></div>
<div class="a" style="left:410px;top:260px;width:97px;height:155px;border:3px solid #ff0000;border-radius:5px"></div>
<div class="a" style="left:1011px;top:223px;width:1px;height:441px;background:#a6a6a6;"></div>
<div class="a" style="left:1012px;top:203px;width:19px;height:461px;background:#e8e8e8;"></div>
<div class="a" style="left:1015px;top:205px;width:15px;height:15px;background:#fff;border:1px solid #a6a6a6"></div>
<svg class="a" style="left:1019px;top:210px;" width="7" height="4" viewBox="0 0 7 4"><path d="M0 4H7L3.5 0Z" fill="#6b6b63"/></svg>
<div class="a" style="left:1015px;top:220px;width:15px;height:407px;background:#fff;border:1px solid #a6a6a6"></div>
<div class="a" style="left:1015px;top:650px;width:15px;height:14px;background:#fff;border:1px solid #a6a6a6"></div>
<svg class="a" style="left:1019px;top:656px;" width="7" height="4" viewBox="0 0 7 4"><path d="M0 0H7L3.5 4Z" fill="#6b6b63"/></svg>
<div class="a" style="left:1px;top:664px;width:1030px;height:28px;background:#e8e8e8;"></div>
<div class="a" style="left:1px;top:664px;width:1011px;height:1px;background:#ababab;"></div>
<div class="a" style="left:1015px;top:627px;width:15px;height:23px;background:#d9d9d9;"></div>
<div class="a" style="left:965px;top:672px;width:32px;height:14px;background:#d9d9d9;"></div>
<div class="a" style="left:1px;top:692px;width:1030px;height:1px;background:#c6c6c6;"></div>
<svg class="a" style="left:25px;top:674px;" width="5" height="8" viewBox="0 0 5 8"><path d="M5 0V8L0 4Z" fill="#bdbdbd"/></svg>
<svg class="a" style="left:54px;top:674px;" width="5" height="8" viewBox="0 0 5 8"><path d="M0 0V8L5 4Z" fill="#bdbdbd"/></svg>
<div class="a" style="left:98px;top:664px;width:107px;height:25px;background:#fff;border-left:1px solid #a6a6a6;border-right:1px solid #a6a6a6"></div>
<div class="a" style="left:98px;top:687px;width:107px;height:2px;background:#00743e;"></div>
<div class="t" style="left:110px;top:672px;font-size:12.9px;color:#00743e;font-weight:bold;">microexcel.ru</div>
<svg class="a" style="left:238px;top:670px;" width="16" height="16" viewBox="0 0 16 16"><circle cx="8" cy="8" r="7.3" fill="none" stroke="#777" stroke-width="1.2"/><path d="M8 4V12M4 8H12" stroke="#777" stroke-width="1.8"/></svg>
<div class="a" style="left:560px;top:671px;width:405px;height:15px;background:#fff;border:1px solid #a6a6a6"></div>
<div class="a" style="left:997px;top:671px;width:15px;height:15px;background:#fff;border:1px solid #a6a6a6"></div>
<svg class="a" style="left:1003px;top:675px;" width="4" height="7" viewBox="0 0 4 7"><path d="M0 0V7L4 3.5Z" fill="#6b6b63"/></svg>
<div class="a" style="left:1px;top:693px;width:1030px;height:17px;background:#f3f3f3;"></div>
<svg class="a" style="left:6px;top:695px;" width="14" height="15" viewBox="0 0 14 15"><circle cx="3" cy="3.9" r="2.9" fill="#4a4a4a"/><rect x="7.2" y="2.2" width="5.6" height="2.4" fill="#4a4a4a"/><path d="M1.65 8V13.35H12.35V2.2" fill="none" stroke="#4a4a4a" stroke-width="1.3"/><path d="M6 7.4H7.5M9 7.4H10.5M3 9.5H4.5M6 9.5H7.5M9 9.5H10.5M3 11.5H4.5M6 11.5H7.5M9 11.5H10.5" stroke="#4a4a4a" stroke-width="1.1"/></svg>
<div class="t" style="left:440px;top:697px;font-size:11px;color:#262626;font-weight:normal;">Среднее: 133 554</div>
<div class="t" style="left:546px;top:697px;font-size:11.6px;color:#262626;font-weight:normal;">Количество: 7</div>
<div class="t" style="left:636px;top:697px;font-size:10.8px;color:#262626;font-weight:normal;">Сумма: 934 881</div>
<div class="a" style="left:733px;top:697px;width:38px;height:13px;background:#c6c6c6;"></div>
<svg class="a" style="left:745px;top:698px;" width="13" height="11" viewBox="0 0 13 11"><rect x="0.5" y="0.5" width="12" height="10" fill="#d9d9d9"/><path d="M0.75 0V10.25H12.25V0M0.75 3.6H12.25M0.75 7H12.25M4.6 0V10.25M8.4 0V10.25" fill="none" stroke="#6b6b63" stroke-width="1.4"/></svg>
<svg class="a" style="left:783px;top:696px;" width="14" height="13" viewBox="0 0 14 13"><rect x="0.65" y="0.65" width="12.7" height="11.7" fill="none" stroke="#6b6b63" stroke-width="1.3"/><rect x="3.15" y="2.65" width="7.7" height="7.7" fill="none" stroke="#6b6b63" stroke-width="1.3"/><path d="M4.8 4.8H9.2M4.8 6.5H9.2M4.8 8.2H9.2" stroke="#6b6b63" stroke-width="1"/></svg>
<svg class="a" style="left:821px;top:696px;" width="14" height="13" viewBox="0 0 14 13"><rect x="0.65" y="0.65" width="12.7" height="11.7" fill="none" stroke="#6b6b63" stroke-width="1.3"/><path d="M2.5 0.65V7.5H9.5V0.65M6 0.65V7.5" fill="none" stroke="#6b6b63" stroke-width="1.3"/></svg>
<div class="a" style="left:852px;top:702px;width:6px;height:2px;background:#555;"></div>
<div class="a" style="left:862px;top:703px;width:100px;height:1px;background:#a0a0a0;"></div>
<div class="a" style="left:910px;top:697px;width:5px;height:11px;background:#6b6b63;"></div>
<svg class="a" style="left:965px;top:698px;" width="9" height="9" viewBox="0 0 9 9"><path d="M4.5 0V9M0 4.5H9" stroke="#555" stroke-width="1.8"/></svg>
<div class="t" style="left:985px;top:698px;font-size:10.6px;color:#262626;font-weight:normal;">100 %</div>
<div class="a" style="left:509px;top:201px;width:278px;height:56px;background:#fff;border:1px solid #c6c6c6;box-shadow:1px 1px 2px rgba(0,0,0,0.16)"></div>
<div class="a" style="left:513px;top:205px;width:72px;height:24px;background:#fff;border:1px solid #c6c6c6"></div>
<div class="a" style="left:584px;top:205px;width:55px;height:24px;background:#fff;border:1px solid #c6c6c6"></div>
<div class="t" style="left:516px;top:210px;font-size:12.2px;color:#333;font-weight:normal;">Calibri</div>
<div class="t" style="left:589px;top:210px;font-size:11.4px;color:#333;font-weight:normal;">12</div>
<svg class="a" style="left:567px;top:214px;" width="14" height="8" viewBox="0 0 14 8"><path d="M0.6 0.6L6.9 7L13.2 0.6" fill="none" stroke="#444" stroke-width="1.2"/></svg>
<svg class="a" style="left:621px;top:214px;" width="14" height="8" viewBox="0 0 14 8"><path d="M0.6 0.6L6.9 7L13.2 0.6" fill="none" stroke="#444" stroke-width="1.2"/></svg>
<svg class="a" style="left:645px;top:210px;" width="14" height="13" viewBox="0 0 14 13"><path d="M1 12.8L4.2 3.6H5.8L9 12.8M2.5 9.2H7.5" fill="none" stroke="#3f3f3f" stroke-width="1.45"/><path d="M7.8 3L10.4 0L13 3Z" fill="#1e87d3"/></svg>
<svg class="a" style="left:667px;top:210px;" width="14" height="13" viewBox="0 0 14 13"><path d="M1.8 12.8L4.5 5.3H5.7L8.4 12.8M3 9.9H7.2" fill="none" stroke="#3f3f3f" stroke-width="1.4"/><path d="M7.9 0H13L10.45 3Z" fill="#1e87d3"/></svg>
<svg class="a" style="left:686px;top:208px;" width="17" height="17" viewBox="0 0 17 17"><rect x="0.9" y="0.9" width="14.6" height="7.6" fill="#fff" stroke="#1e87d3" stroke-width="1.8"/><circle cx="7.6" cy="4.4" r="2.1" fill="#1e87d3"/><rect x="7" y="6" width="9" height="9" fill="#fff"/><ellipse cx="12" cy="7.6" rx="3.8" ry="1.3" fill="#f6b85f"/><rect x="8.2" y="7.6" width="7.6" height="5" fill="#f6b85f"/><path d="M8.2 9.6H15.8M8.2 11.6H15.8" stroke="#fff" stroke-width="0.7"/><ellipse cx="7" cy="12.2" rx="3.6" ry="1.3" fill="#f6b85f"/><rect x="3.4" y="12.2" width="7.2" height="3.4" fill="#f6b85f"/><path d="M3.4 14H10.6" stroke="#fff" stroke-width="0.7"/></svg>
<svg class="a" style="left:708px;top:215px;" width="5" height="3" viewBox="0 0 5 3"><path d="M0 0H5L2.5 3Z" fill="#68665f"/></svg>
<div class="t" style="left:722.5px;top:210.5px;font-size:14px;color:#333;font-weight:normal;">%</div>
<div class="t" style="left:743px;top:212.5px;font-size:9.2px;color:#333;font-weight:normal;letter-spacing:-0.1px">000</div>
<svg class="a" style="left:764px;top:209px;" width="15" height="15" viewBox="0 0 15 15"><rect x="0.75" y="0.75" width="13.5" height="13.5" fill="#fff" stroke="#68665f" stroke-width="1.2"/><path d="M0.75 4.3H14.25M0.75 10.7H14.25M7.5 0.75V4.3M7.5 10.7V14.25" stroke="#68665f" stroke-width="1.3"/><path d="M3 7.5H12M5 5.7L3 7.5L5 9.3M10 5.7L12 7.5L10 9.3" fill="none" stroke="#1e87d3" stroke-width="1.1"/></svg>
<div class="t" style="left:517px;top:234px;font-size:13.8px;color:#444;font-weight:bold;">Ж</div>
<div class="t" style="left:541px;top:234.5px;font-size:12.6px;color:#444;font-weight:bold;font-style:italic">К</div>
<svg class="a" style="left:561px;top:237px;" width="14" height="12" viewBox="0 0 14 12"><rect x="0.0" y="0" width="14" height="1.2" fill="#68665f"/><rect x="2.5" y="3" width="9" height="1.2" fill="#68665f"/><rect x="0.0" y="6" width="14" height="1.2" fill="#68665f"/><rect x="2.5" y="9" width="9" height="1.2" fill="#68665f"/></svg>
<svg class="a" style="left:582px;top:233px;" width="17" height="16" viewBox="0 0 17 16"><path d="M2.5 6.5L8 1.5L13.5 6.5L8 11.5Z" fill="#fff" stroke="#68665f" stroke-width="1.3"/><path d="M5.5 4.5V1.8A1.3 1.3 0 0 1 8 1.8V5" fill="none" stroke="#68665f" stroke-width="1"/><path d="M13.5 4Q16 5 15.8 7.5Q15.5 9.5 14 10L14.2 6Z" fill="#1e87d3"/><rect x="0" y="12.4" width="16" height="3.6" fill="#ffff00"/></svg>
<svg class="a" style="left:604px;top:240px;" width="5" height="3" viewBox="0 0 5 3"><path d="M0 0H5L2.5 3Z" fill="#68665f"/></svg>
<svg class="a" style="left:616px;top:233px;" width="16" height="16" viewBox="0 0 16 16"><path d="M3.6 11.9L8 1L12.4 11.9M5.2 8.2H10.8" fill="none" stroke="#444" stroke-width="1.9"/><rect x="0" y="12.4" width="16" height="3.6" fill="#ff0000"/></svg>
<svg class="a" style="left:638px;top:240px;" width="5" height="3" viewBox="0 0 5 3"><path d="M0 0H5L2.5 3Z" fill="#68665f"/></svg>
<svg class="a" style="left:651px;top:234px;" width="14" height="13" viewBox="0 0 14 13"><rect x="0" y="0" width="1" height="1" fill="#8a8a8a"/><rect x="0" y="5" width="1" height="1" fill="#8a8a8a"/><rect x="2" y="0" width="1" height="1" fill="#8a8a8a"/><rect x="2" y="5" width="1" height="1" fill="#8a8a8a"/><rect x="4" y="0" width="1" height="1" fill="#8a8a8a"/><rect x="4" y="5" width="1" height="1" fill="#8a8a8a"/><rect x="6" y="0" width="1" height="1" fill="#8a8a8a"/><rect x="6" y="5" width="1" height="1" fill="#8a8a8a"/><rect x="8" y="0" width="1" height="1" fill="#8a8a8a"/><rect x="8" y="5" width="1" height="1" fill="#8a8a8a"/><rect x="10" y="0" width="1" height="1" fill="#8a8a8a"/><rect x="10" y="5" width="1" height="1" fill="#8a8a8a"/><rect x="12" y="0" width="1" height="1" fill="#8a8a8a"/><rect x="12" y="5" width="1" height="1" fill="#8a8a8a"/><rect x="0" y="0" width="1" height="1" fill="#8a8a8a"/><rect x="13" y="0" width="1" height="1" fill="#8a8a8a"/><rect x="7" y="0" width="1" height="1" fill="#8a8a8a"/><rect x="0" y="2" width="1" height="1" fill="#8a8a8a"/><rect x="13" y="2" width="1" height="1" fill="#8a8a8a"/><rect x="7" y="2" width="1" height="1" fill="#8a8a8a"/><rect x="0" y="4" width="1" height="1" fill="#8a8a8a"/><rect x="13" y="4" width="1" height="1" fill="#8a8a8a"/><rect x="7" y="4" width="1" height="1" fill="#8a8a8a"/><rect x="0" y="6" width="1" height="1" fill="#8a8a8a"/><rect x="13" y="6" width="1" height="1" fill="#8a8a8a"/><rect x="7" y="6" width="1" height="1" fill="#8a8a8a"/><rect x="0" y="8" width="1" height="1" fill="#8a8a8a"/><rect x="13" y="8" width="1" height="1" fill="#8a8a8a"/><rect x="7" y="8" width="1" height="1" fill="#8a8a8a"/><rect x="0" y="10" width="1" height="1" fill="#8a8a8a"/><rect x="13" y="10" width="1" height="1" fill="#8a8a8a"/><rect x="7" y="10" width="1" height="1" fill="#8a8a8a"/><rect x="0" y="11.5" width="14" height="1.5" fill="#68665f"/></svg>
<svg class="a" style="left:672px;top:240px;" width="5" height="3" viewBox="0 0 5 3"><path d="M0 0H5L2.5 3Z" fill="#68665f"/></svg>
<svg class="a" style="left:683px;top:233px;" width="16" height="15" viewBox="0 0 16 15"><path d="M0.8 4H6.6M3.3 1.4L0.8 4L3.3 6.6" fill="none" stroke="#1e87d3" stroke-width="1.4"/><text x="9.3" y="7" font-size="9" font-family="Liberation Sans" fill="#444">0</text><text x="1.5" y="14.5" font-size="9" font-family="Liberation Sans" fill="#444" letter-spacing="-0.4">,00</text></svg>
<svg class="a" style="left:705px;top:233px;" width="16" height="15" viewBox="0 0 16 15"><text x="2" y="7" font-size="9" font-family="Liberation Sans" fill="#444" letter-spacing="-0.4">,00</text><path d="M0.5 11H6.3M3.8 8.4L6.3 11L3.8 13.6" fill="none" stroke="#1e87d3" stroke-width="1.4"/><text x="6.5" y="14.5" font-size="9" font-family="Liberation Sans" fill="#444" letter-spacing="-0.4">,0</text></svg>
<svg class="a" style="left:728px;top:233px;" width="17" height="15" viewBox="0 0 17 15"><g transform="translate(9.0 7.5) rotate(45)"><rect x="-1.6" y="-10" width="3.2" height="5" rx="0.8" fill="#68665f"/><rect x="-3.3" y="-5.5" width="6.6" height="5" fill="#68665f"/><path d="M-3.3 0H3.3L5 6.5H-5Z" fill="#f6b85f"/></g></svg>
<div class="a" style="left:509px;top:272px;width:278px;height:425px;background:#fff;border:1px solid #c6c6c6;box-shadow:1px 1px 2px rgba(0,0,0,0.16)"></div>
<svg class="a" style="left:516px;top:278px;" width="15" height="15" viewBox="0 0 15 15"><path d="M3 0.5L8.6 9.5M12 0.5L6.4 9.5" stroke="#68665f" stroke-width="1.7"/><circle cx="3.2" cy="11.6" r="2.5" fill="none" stroke="#1e87d3" stroke-width="1.5"/><circle cx="11.4" cy="11.6" r="2.5" fill="none" stroke="#1e87d3" stroke-width="1.5"/></svg>
<div class="t" style="left:543px;top:280.24px;font-size:12.0px;color:#333;font-weight:normal;text-decoration-thickness:1px;text-underline-offset:2px">В<u>ы</u>резать</div>
<svg class="a" style="left:515px;top:302px;" width="16" height="15" viewBox="0 0 16 15"><path d="M0.75 0.75H5.5L7.3 2.5V10.5H0.75Z" fill="#fff" stroke="#68665f" stroke-width="1.3"/><path d="M6.75 3.75H11.5L14.3 6.5V14.25H6.75Z" fill="#fff" stroke="#68665f" stroke-width="1.3"/><path d="M2.3 3.6H4.7M2.3 5.8H4.7M2.3 8H4.7" stroke="#1e87d3" stroke-width="1.1"/><path d="M8.5 7.4H12.5M8.5 9.6H12.5M8.5 11.8H12.5" stroke="#1e87d3" stroke-width="1.1"/></svg>
<div class="t" style="left:543px;top:304.24px;font-size:12.0px;color:#333;font-weight:normal;text-decoration-thickness:1px;text-underline-offset:2px"><u>К</u>опировать</div>
<div class="a" style="left:535px;top:322px;width:250px;height:22px;background:#e9e9e9;"></div>
<svg class="a" style="left:515px;top:325px;" width="17" height="17" viewBox="0 0 17 17"><rect x="0.7" y="2.4" width="13.3" height="13.3" rx="0.8" fill="#f6b85f"/><rect x="4.3" y="1.2" width="5.6" height="2.6" rx="0.8" fill="#68665f"/><circle cx="7.1" cy="1.3" r="1.1" fill="#68665f"/><path d="M6.3 6.3H12L16 10V16.5H6.3Z" fill="#fff" stroke="#fff" stroke-width="1.6"/><path d="M7 7H11.7L15.3 10.3V15.8H7Z" fill="#fff" stroke="#68665f" stroke-width="1.2"/></svg>
<div class="t" style="left:543px;top:326.41px;font-size:11.8px;color:#444;font-weight:bold;text-decoration-thickness:1px;text-underline-offset:2px">Параметры вставки:</div>
<svg class="a" style="left:540px;top:347px;" width="23" height="25" viewBox="0 0 23 25"><defs><pattern id="dots2" width="3.5" height="3.5" patternUnits="userSpaceOnUse"><circle cx="1.5" cy="1.5" r="0.6" fill="#fbe0b0"/></pattern></defs><rect x="1" y="3.5" width="17.5" height="17.5" rx="1" fill="#f6b85f"/><rect x="2" y="7" width="8" height="13" fill="url(#dots2)"/><rect x="4" y="1.2" width="11" height="3.4" rx="1" fill="#68665f"/><circle cx="9.5" cy="1.6" r="1.4" fill="#68665f"/><path d="M9.5 9.5H17.5L22.5 14V24.5H9.5Z" fill="#fff" stroke="#fff" stroke-width="2"/><path d="M10.6 10.4H17L21.6 14.5V23.6H10.6Z" fill="#fff" stroke="#68665f" stroke-width="1.3"/><path d="M17 10.4V14.5H21.6" fill="none" stroke="#68665f" stroke-width="1.1"/></svg>
<div class="t" style="left:543px;top:380.58px;font-size:11.6px;color:#333;font-weight:normal;text-decoration-thickness:1px;text-underline-offset:2px">Специальная <u>в</u>ставка...</div>
<div class="a" style="left:543px;top:398px;width:242px;height:1px;background:#dadada;"></div>
<svg class="a" style="left:515px;top:404px;" width="16" height="16" viewBox="0 0 16 16"><circle cx="9.5" cy="6.5" r="5" fill="#fff" stroke="#1e87d3" stroke-width="1.6"/><circle cx="9.5" cy="4.3" r="0.9" fill="#444"/><path d="M9.5 5.8V9.2" stroke="#444" stroke-width="1.6"/><path d="M6 10L1 14.8" stroke="#1e87d3" stroke-width="2.2"/></svg>
<div class="t" style="left:543px;top:406.16px;font-size:12.1px;color:#333;font-weight:normal;text-decoration-thickness:1px;text-underline-offset:2px"><u>И</u>нтеллектуальный поиск</div>
<div class="a" style="left:543px;top:424px;width:242px;height:1px;background:#dadada;"></div>
<div class="t" style="left:543px;top:432.67px;font-size:11.5px;color:#333;font-weight:normal;text-decoration-thickness:1px;text-underline-offset:2px">Встав<u>и</u>ть...</div>
<div class="t" style="left:543px;top:456.67px;font-size:11.5px;color:#333;font-weight:normal;text-decoration-thickness:1px;text-underline-offset:2px"><u>У</u>далить...</div>
<div class="t" style="left:543px;top:480.24px;font-size:12.0px;color:#333;font-weight:normal;text-decoration-thickness:1px;text-underline-offset:2px">Очистить содер<u>ж</u>имое</div>
<div class="a" style="left:543px;top:498px;width:242px;height:1px;background:#dadada;"></div>
<svg class="a" style="left:515px;top:503px;" width="16" height="16" viewBox="0 0 16 16"><rect x="3.75" y="3.75" width="11.5" height="11.5" fill="#fff" stroke="#68665f" stroke-width="1.3"/><path d="M8 7H13" stroke="#e8701f" stroke-width="1.4"/><path d="M6 10H13" stroke="#1e87d3" stroke-width="1.4"/><path d="M6 13H13" stroke="#21a366" stroke-width="1.4"/><path d="M4.5 0L0.8 6.2H3.4L1.6 10.5L6.8 4.3H4Z" fill="#f6b85f" stroke="#fff" stroke-width="0.6"/></svg>
<div class="t" style="left:543px;top:506.33px;font-size:11.9px;color:#333;font-weight:normal;text-decoration-thickness:1px;text-underline-offset:2px">Экспресс-анали<u>з</u></div>
<div class="t" style="left:543px;top:530.24px;font-size:12.0px;color:#333;font-weight:normal;text-decoration-thickness:1px;text-underline-offset:2px"><u>Ф</u>ильтр</div>
<svg class="a" style="left:772px;top:532px;" width="5" height="8" viewBox="0 0 5 8"><path d="M0 0L5 4L0 8Z" fill="#68665f"/></svg>
<div class="t" style="left:543px;top:554.24px;font-size:12.0px;color:#333;font-weight:normal;text-decoration-thickness:1px;text-underline-offset:2px"><u>С</u>ортировка</div>
<svg class="a" style="left:772px;top:556px;" width="5" height="8" viewBox="0 0 5 8"><path d="M0 0L5 4L0 8Z" fill="#68665f"/></svg>
<div class="a" style="left:543px;top:572px;width:242px;height:1px;background:#dadada;"></div>
<svg class="a" style="left:514px;top:577px;" width="17" height="17" viewBox="0 0 17 17"><path d="M4.65 4.65H15.35V12.35H9L5.5 15.5V12.35H4.65Z" fill="#fff" stroke="#68665f" stroke-width="1.3" stroke-linejoin="round"/><path d="M3.5 0.5V6.5M0.5 3.5H6.5" stroke="#21a366" stroke-width="1.6"/></svg>
<div class="t" style="left:543px;top:580.24px;font-size:12.0px;color:#333;font-weight:normal;text-decoration-thickness:1px;text-underline-offset:2px">Вставить приме<u>ч</u>ание</div>
<div class="a" style="left:511px;top:602px;width:273px;height:21px;background:#c6c6c6;"></div>
<svg class="a" style="left:516px;top:604px;" width="14" height="16" viewBox="0 0 14 16"><rect x="0.65" y="0.65" width="12.7" height="14.7" fill="#fff" stroke="#68665f" stroke-width="1.3"/><rect x="0" y="0" width="14" height="2.6" fill="#1e87d3"/><circle cx="3.6" cy="7.2" r="1.1" fill="none" stroke="#68665f" stroke-width="0.9"/><circle cx="3.6" cy="11.4" r="1.1" fill="none" stroke="#68665f" stroke-width="0.9"/><path d="M6 7.2H10.5M6 11.4H10.5" stroke="#68665f" stroke-width="1.1"/></svg>
<div class="t" style="left:543px;top:605.28px;font-size:11.95px;color:#000;font-weight:normal;text-decoration-thickness:1px;text-underline-offset:2px">Формат <u>я</u>чеек...</div>
<div class="t" style="left:543px;top:630.2px;font-size:12.05px;color:#333;font-weight:normal;text-decoration-thickness:1px;text-underline-offset:2px">Вы<u>б</u>рать из раскрывающегося списка...</div>
<div class="t" style="left:543px;top:654.16px;font-size:12.1px;color:#333;font-weight:normal;text-decoration-thickness:1px;text-underline-offset:2px">Присвоит<u>ь</u> имя...</div>
<svg class="a" style="left:514px;top:675px;" width="18" height="18" viewBox="0 0 18 18"><path d="M2.3 9.5A5.5 5.5 0 1 1 12.3 9.5" fill="#fff" stroke="#68665f" stroke-width="1.2"/><path d="M1.8 6.5H12.8M7.3 1V9.5M4.2 2Q6 5.5 4.2 9.5M10.4 2Q8.6 5.5 10.4 9.5" fill="none" stroke="#68665f" stroke-width="0.9"/><rect x="2.3" y="11.3" width="7.2" height="5" rx="2.5" fill="#fff" stroke="#1e87d3" stroke-width="1.7"/><rect x="9" y="11.3" width="7.2" height="5" rx="2.5" fill="none" stroke="#1e87d3" stroke-width="1.7"/></svg>
<div class="t" style="left:543px;top:677.41px;font-size:11.8px;color:#333;font-weight:normal;text-decoration-thickness:1px;text-underline-offset:2px">С<u>с</u>ылка</div>
<div class="a" style="left:510px;top:600px;width:275px;height:25px;border:3px solid #ff0000;border-radius:5px"></div>
<div class="a" style="left:0px;top:0px;width:1px;height:711px;background:#00743e;"></div>
<div class="a" style="left:1031px;top:0px;width:1px;height:711px;background:#00743e;"></div>
<div class="a" style="left:0px;top:710px;width:1032px;height:1px;background:#00743e;"></div>
</body></html>
